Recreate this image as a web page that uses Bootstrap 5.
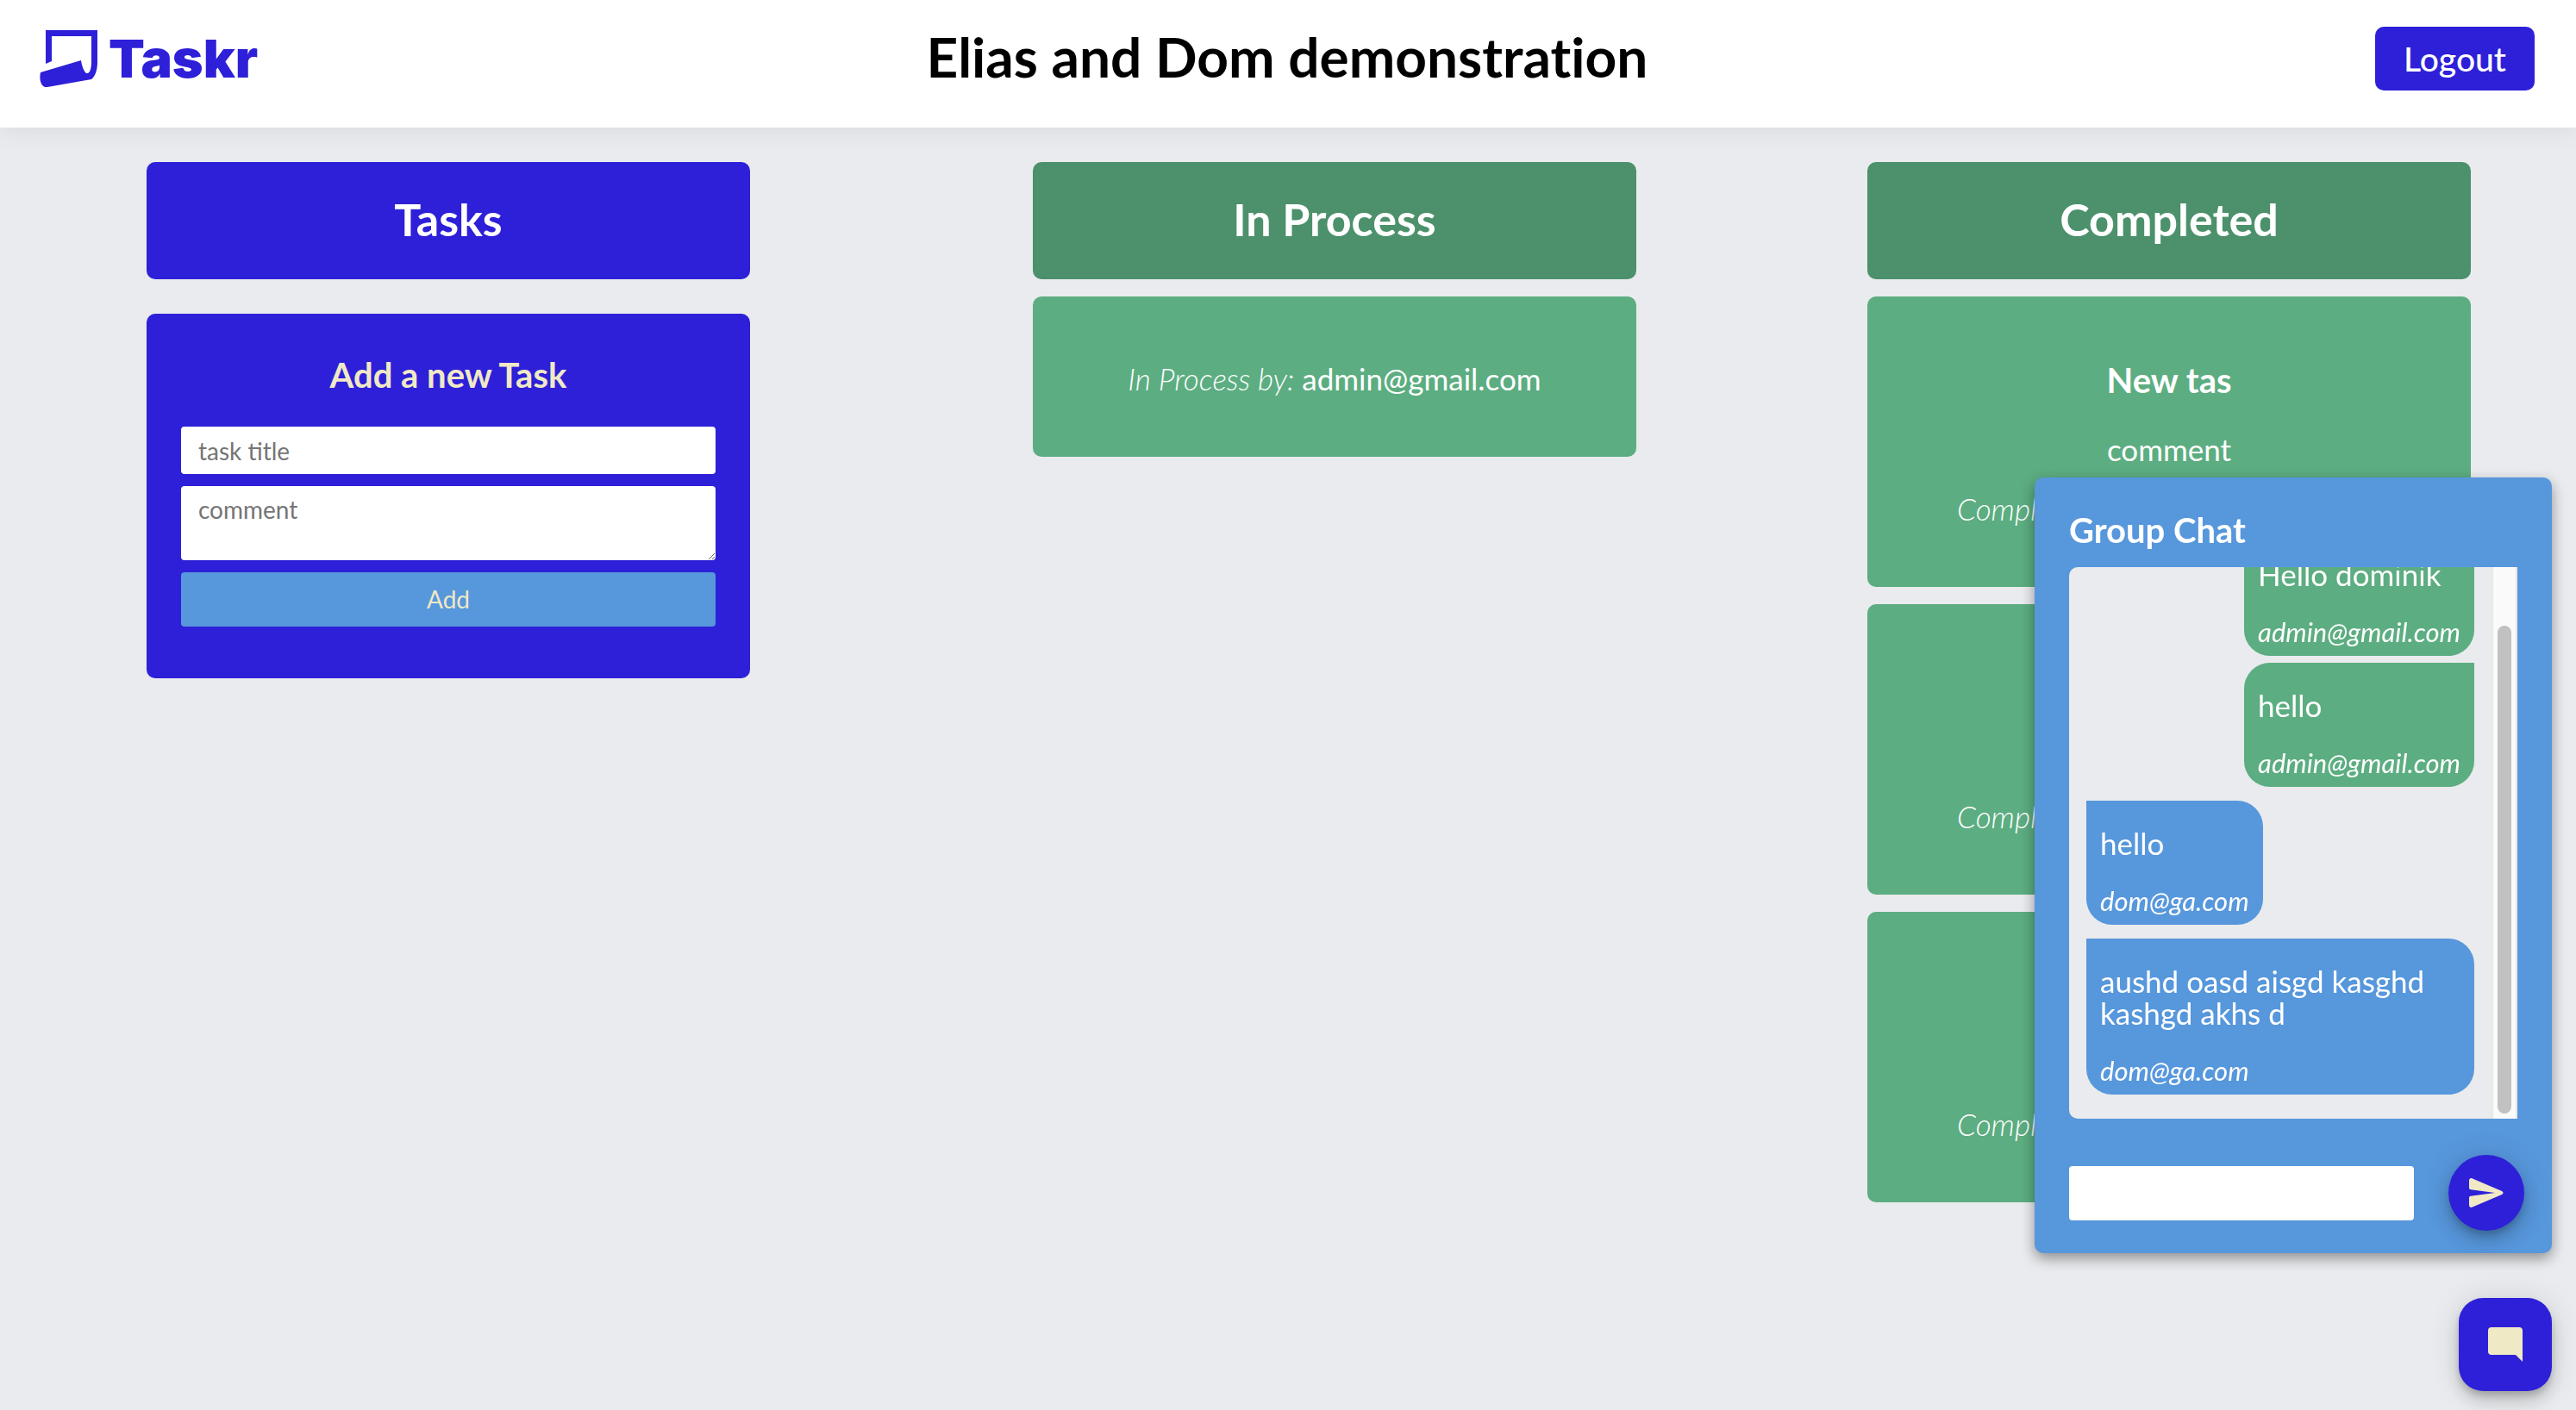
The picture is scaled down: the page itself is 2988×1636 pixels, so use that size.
<!DOCTYPE html>
<html lang="en">
<head>
<meta charset="utf-8">
<meta name="viewport" content="width=device-width, initial-scale=1">
<title>Taskr</title>
<link href="https://cdn.jsdelivr.net/npm/bootstrap@5.3.0/dist/css/bootstrap.min.css" rel="stylesheet">
<style>
  :root { --ink: #2e20d8; --sky: #5797dc; --leaf: #5cad81; --forest: #4c916b; --cream: #f0e9c5; --paper: #e9ebee; }
  body { font-family: Lato, "Open Sans", sans-serif; font-variant-ligatures: none; font-size: 35px; line-height: 40px; background: var(--paper); color: #fff; min-height: 100vh; }
  .topbar { display: grid; grid-template-columns: 1fr auto 1fr; padding: 31px 48px 43px 46px; background: #fff; box-shadow: 0 4px 30px rgba(0,0,0,.07); }
  .brand { color: var(--ink); font: 900 61px/66px Inter, sans-serif; gap: 12px; }
  .page-title { font-size: 64px; line-height: 66px; font-weight: 700; color: #000; }
  .btn-logout { background: var(--ink); color: #fff; font-size: 39px; line-height: 44px; font-weight: 500; padding: 15px 33px; border-radius: 10px; }
  .btn-logout:hover { background: #2419b0; color: #fff; }
  .board { display: grid; grid-template-columns: 1040fr 1016fr 932fr; padding-top: 40px; }
  .board > section:last-child { padding-right: 12px; }
  .lane { width: 700px; max-width: 90%; gap: 20px; }
  .lane-head { font-size: 52px; line-height: 60px; font-weight: 700; padding: 36px 0 40px; border-radius: 10px; background: var(--forest); }
  .fill-ink { background: var(--ink); }
  .task { background: var(--leaf); border-radius: 10px; padding: 75px 40px 71px; }
  .task-done { min-height: 337px; }
  .task h3, .panel-title, .form-title { font-size: 40px; line-height: 44px; font-weight: 700; }
  .task h3 { margin-bottom: 38px; }
  .task p { margin-bottom: 29px; }
  .task p:last-child { margin-bottom: 0; }
  .task em { font-weight: 300; }
  .new-task { border-radius: 10px; padding: 49px 40px 60px; margin-top: 20px; }
  .form-title { color: var(--cream); margin-bottom: 38px; }
  .new-task form { gap: 14px; }
  .new-task .form-control { font-size: 28px; line-height: 34px; padding: 10px 20px; border: 0; border-radius: 4px; height: 55px; }
  .new-task textarea.form-control { height: 86px; }
  .form-control::placeholder { color: #757575; }
  .btn-add { background: var(--sky); color: var(--cream); font-size: 28px; line-height: 35px; padding: 14px; border: 0; border-radius: 4px; }
  .btn-add:hover { background: #4685ca; color: var(--cream); }
  .chat { right: 28px; bottom: 182px; width: 600px; background: var(--sky); border-radius: 10px; padding: 39px 40px 26px; box-shadow: 0 6px 16px rgba(0,0,0,.4); }
  .panel-title { margin-bottom: 21px; }
  .thread { height: 640px; background: var(--paper); border-radius: 10px 0 0 10px; margin-bottom: 42px; }
  .messages { padding: 0 20px 28px; gap: 16px; }
  .bubble { padding: 31px 16px 10px; border-radius: 30px; line-height: 37px; max-width: 100%; flex-shrink: 0; }
  .bubble p { margin-bottom: 30px; }
  .bubble em { display: block; font-size: 31px; line-height: 36px; }
  .mine { background: var(--leaf); border-top-right-radius: 0; align-self: flex-end; }
  .mine + .mine { margin-top: -8px; }
  .theirs { background: var(--sky); border-top-left-radius: 0; align-self: flex-start; }
  .track { width: 30px; background: #fafafa; border: 2px solid #e8e8e8; border-width: 0 2px; padding: 68px 5px 6px; }
  .thumb { background: #c1c1c1; border-radius: 8px; }
  .composer { gap: 40px; margin-right: -8px; }
  .composer .form-control { font-size: 28px; height: 63px; border: 0; border-radius: 4px; padding: 9px 20px; }
  .round-btn { background: var(--ink); color: var(--cream); border: 0; padding: 0; box-shadow: 0 6px 10px -2px rgba(0,0,0,.2), 0 12px 20px rgba(0,0,0,.14), 0 2px 36px rgba(0,0,0,.12); }
  .round-btn:hover { background: #2419b0; color: var(--cream); }
  .send { width: 88px; height: 88px; border-radius: 50%; }
  .chat-toggle { width: 108px; height: 108px; border-radius: 28px; right: 28px; bottom: 22px; }
</style>
</head>
<body>
<header class="topbar align-items-center">
  <a class="brand d-flex align-items-center text-decoration-none" href="#">
    <svg width="68" height="67" viewBox="0 0 68 67" fill="currentColor" aria-hidden="true"><path d="M7 0H67V37C67 47 64 54 60 57L9 66C2 67-1 58 1 49L48 35C49 42 52 50 55 50C58 50 60 46 60 36V7H14V36L7 39Z"/></svg>
    <span>Taskr</span>
  </a>
  <h1 class="page-title m-0 pb-1">Elias and Dom demonstration</h1>
  <div class="d-flex justify-content-end"><button type="button" class="btn btn-logout border-0">Logout</button></div>
</header>

<main class="board text-center">
  <section class="d-flex justify-content-center">
    <div class="lane d-flex flex-column">
      <h2 class="lane-head fill-ink m-0">Tasks</h2>
      <div class="new-task fill-ink">
        <h3 class="form-title">Add a new Task</h3>
        <form class="d-flex flex-column">
          <input class="form-control" type="text" placeholder="task title" aria-label="task title">
          <textarea class="form-control" placeholder="comment" aria-label="comment"></textarea>
          <button type="button" class="btn btn-add">Add</button>
        </form>
      </div>
    </div>
  </section>
  <section class="d-flex justify-content-center">
    <div class="lane d-flex flex-column">
      <h2 class="lane-head m-0">In Process</h2>
      <article class="task"><p><em>In Process by:</em> admin@gmail.com</p></article>
    </div>
  </section>
  <section class="d-flex justify-content-center">
    <div class="lane d-flex flex-column">
      <h2 class="lane-head m-0">Completed</h2>
      <article class="task task-done">
        <h3>New tas</h3>
        <p>comment</p>
        <p><em>Completed by:</em> admin@gmail.com</p>
      </article>
      <article class="task task-done d-flex flex-column justify-content-end"><p><em>Completed by:</em> admin@gmail.com</p></article>
      <article class="task task-done d-flex flex-column justify-content-end"><p><em>Completed by:</em> admin@gmail.com</p></article>
    </div>
  </section>
</main>

<aside class="chat position-fixed" aria-label="Group Chat">
  <h2 class="panel-title">Group Chat</h2>
  <div class="thread d-flex overflow-hidden">
    <div class="messages d-flex flex-column justify-content-end flex-grow-1">
      <div class="bubble mine"><p>Hello dominik</p><em>admin@gmail.com</em></div>
      <div class="bubble mine"><p>hello</p><em>admin@gmail.com</em></div>
      <div class="bubble theirs"><p>hello</p><em>dom@ga.com</em></div>
      <div class="bubble theirs"><p>aushd oasd aisgd kasghd kashgd akhs d</p><em>dom@ga.com</em></div>
    </div>
    <div class="track d-flex flex-shrink-0"><div class="thumb flex-grow-1"></div></div>
  </div>
  <form class="composer d-flex align-items-center">
    <input class="form-control" type="text" aria-label="Message">
    <button type="button" class="btn round-btn send d-flex align-items-center justify-content-center flex-shrink-0" aria-label="Send">
      <svg width="40" height="34" viewBox="0 0 40 34" fill="currentColor"><path d="M0 3C0 .5 2-.5 4 .5L38 15Q41 17 38 19L4 33.500C2 34.500 0 33.500 0 31V22.500Q0 21 2 20.700L30 17L2 13.300Q0 13 0 11.500Z"/></svg>
    </button>
  </form>
</aside>
<button type="button" class="btn round-btn chat-toggle position-fixed d-flex align-items-center justify-content-center" aria-label="Toggle chat">
  <svg width="40" height="40" viewBox="0 0 40 40" fill="currentColor"><path d="M4 0H36Q40 0 40 4V40L32 32H4Q0 32 0 28V4Q0 0 4 0Z"/></svg>
</button>
<script src="https://cdn.jsdelivr.net/npm/bootstrap@5.3.0/dist/js/bootstrap.bundle.min.js"></script>
</body>
</html>
